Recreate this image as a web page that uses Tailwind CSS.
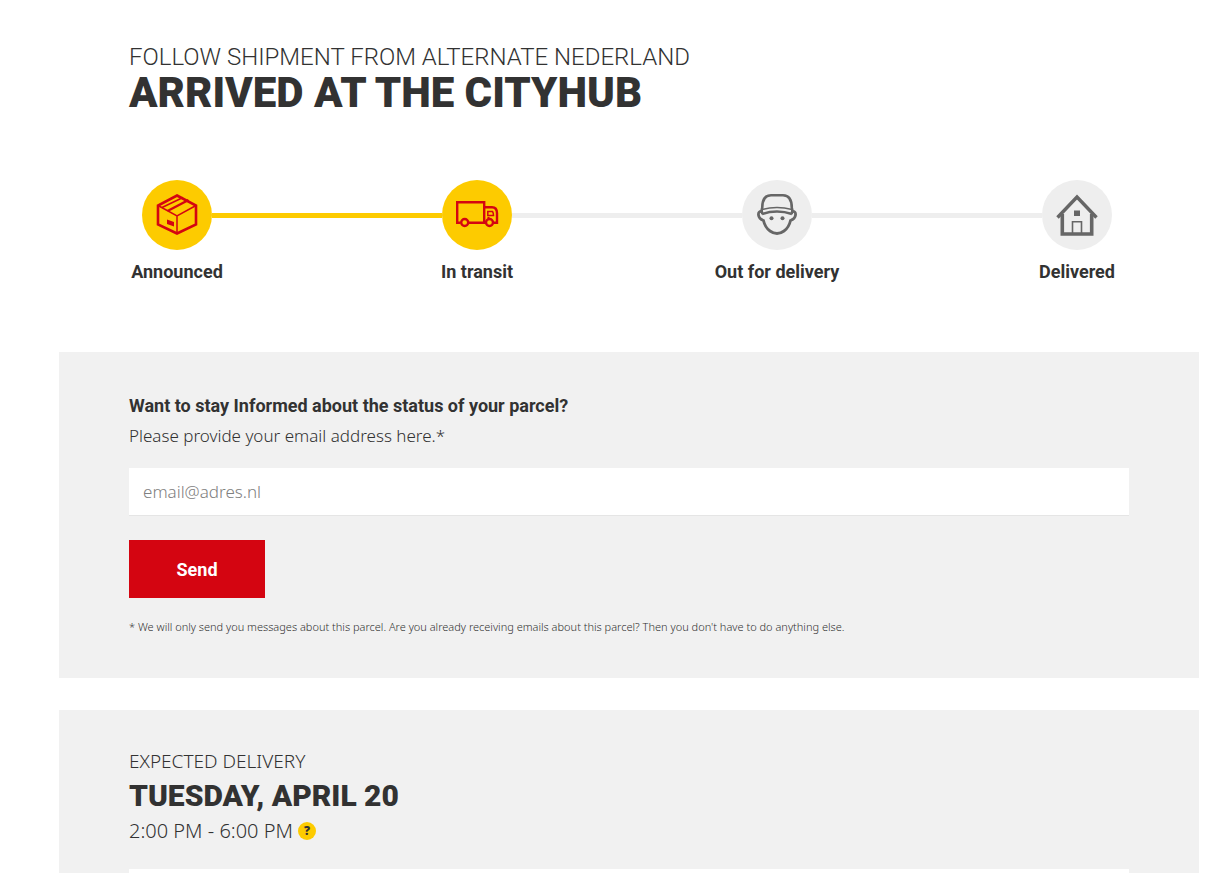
<!DOCTYPE html>
<html lang="en">
  <head>
    <meta charset="UTF-8" />
    <meta name="viewport" content="width=device-width, initial-scale=1.0" />
    <title>Follow shipment</title>
    <script src="https://cdn.jsdelivr.net/npm/@tailwindcss/browser@4"></script>
  </head>
  <body class="bg-white text-[#323232] font-['Noto_Sans',sans-serif]">
    <main class="pt-[41px] pl-[59px] pr-6">
      <!-- Title -->
      <header class="px-[70px]">
        <h1 class="font-['Roboto',sans-serif] uppercase">
          <span class="block text-[24px] leading-8 font-light">Follow shipment from Alternate Nederland</span>
          <span class="block text-[42px] leading-10 font-black">Arrived at the CityHub</span>
        </h1>
      </header>

      <!-- Progress -->
      <ol class="flex items-start mt-[67px] ml-[70px] mr-[74px] text-[18px] leading-6 font-bold font-['Roboto',sans-serif] whitespace-nowrap">
        <li class="flex w-24 flex-col items-center gap-[10px]">
          <span class="flex size-[70px] items-center justify-center rounded-full bg-[#fdcb00]">
            <svg class="size-[70px]" viewBox="0 0 70 70" fill="none" stroke="#d40511" aria-hidden="true">
              <path d="M35 15.500 54 25.500v19L35 53.500 16 44.500v-19z" stroke-width="2.600" />
              <path d="M16 25.500 35 36l19-10.500M35 36v17" stroke-width="1.500" />
              <path d="m25.500 31 21-11" stroke-width="2.400" />
              <path d="m20 27.500 21-10" stroke-width="1.500" />
              <path d="m25 39.500 7 2.500v4.500l-7-2.500z" fill="#d40511" stroke="none" />
            </svg>
          </span>
          <span>Announced</span>
        </li>
        <li class="mt-[33px] -mx-[13px] h-[5px] flex-1 bg-[#fdcb00]" aria-hidden="true"></li>
        <li class="flex w-24 flex-col items-center gap-[10px]">
          <span class="flex size-[70px] items-center justify-center rounded-full bg-[#fdcb00]">
            <svg class="size-[70px]" viewBox="0 0 70 70" fill="none" stroke="#d40511" stroke-width="2.400" aria-hidden="true">
              <path d="M18.500 42.800h-3.300V22.200h27v20.600H27M42.200 27.200H50q5 0 5 6v9.600h-3.300M42.200 42.800h1.500" />
              <circle cx="22.700" cy="42.500" r="3.500" />
              <circle cx="47.500" cy="42.500" r="3.500" />
              <path d="M45.800 31.500h4.700q1 1.500 1 4h-5.700z" stroke-width="1.500" />
              <path d="M45.500 37.500h2" stroke-width="1.200" />
            </svg>
          </span>
          <span>In transit</span>
        </li>
        <li class="mt-[33px] -mx-[13px] h-[5px] flex-1 bg-[#eeeeee]" aria-hidden="true"></li>
        <li class="flex w-24 flex-col items-center gap-[10px]">
          <span class="flex size-[70px] items-center justify-center rounded-full bg-[#eeeeee]">
            <svg class="size-[70px]" viewBox="0 0 70 70" fill="none" stroke="#666" aria-hidden="true">
              <path d="M20.500 34q-1.500-3.500-.3-6Q20.200 15.300 29 15.300h12q8.800 0 8.800 12.700 1.200 2.500-.3 6" stroke-width="2.600" />
              <path d="M20 29.500q15-4 30 0" stroke-width="1.400" />
              <path d="M20 34q15-5 30 0" stroke-width="2.600" />
              <path d="M20 31.500q-4-.5-3.500 3.500t5 5.500q1.500 7 6.500 10.500 7 5 14 0 5-3.500 6.500-10.500 4.500-1.500 5-5.500t-3.500-3.500" stroke-width="2.800" />
              <circle cx="29.500" cy="38.300" r="2" fill="#666" stroke="none" />
              <circle cx="40.500" cy="38.300" r="2" fill="#666" stroke="none" />
            </svg>
          </span>
          <span>Out for delivery</span>
        </li>
        <li class="mt-[33px] -mx-[13px] h-[5px] flex-1 bg-[#eeeeee]" aria-hidden="true"></li>
        <li class="flex w-24 flex-col items-center gap-[10px]">
          <span class="flex size-[70px] items-center justify-center rounded-full bg-[#eeeeee]">
            <svg class="size-[70px]" viewBox="0 0 70 70" fill="none" stroke="#666" aria-hidden="true">
              <path d="M15.500 37.500 35 17l19.500 20.500" stroke-width="3.400" />
              <path d="M20.300 34v20h29.400V34" stroke-width="3.600" />
              <path d="M30.500 53V41.800h9V53" stroke-width="1.600" />
              <path d="M32 30.500h6v5.500h-6z" fill="#666" stroke="none" />
            </svg>
          </span>
          <span>Delivered</span>
        </li>
      </ol>

      <!-- Email updates -->
      <section class="mt-[68px] bg-[#f1f1f1] px-[70px] pt-10 pb-[42px]">
        <form>
          <h2 class="text-[18px] leading-7 font-bold font-['Roboto',sans-serif]">Want to stay Informed about the status of your parcel?</h2>
          <label for="email" class="mt-1 block text-[17px] leading-6 font-light">Please provide your email address here.*</label>
          <input
            type="email"
            id="email"
            name="email"
            placeholder="email@adres.nl"
            class="mt-5 block h-12 w-full border-b border-[#e5e5e5] bg-white px-[14px] text-[17px] font-light placeholder:text-[#808080]"
          />
          <button type="button" class="mt-6 block h-[58px] w-[136px] bg-[#d40511] text-[18px] font-bold text-white font-['Roboto',sans-serif]">Send</button>
          <p class="mt-5 text-[11px] leading-[18px] text-[#323232] font-light">* We will only send you messages about this parcel. Are you already receiving emails about this parcel? Then you don't have to do anything else.</p>
        </form>
      </section>

      <!-- Expected delivery -->
      <section class="mt-8 bg-[#f1f1f1] px-[70px] pt-9 pb-10">
        <h2 class="uppercase">
          <span class="block text-[19px] leading-[30px] font-light">Expected delivery</span>
          <span class="block text-[30px] leading-10 font-black font-['Roboto',sans-serif]">Tuesday, April 20</span>
        </h2>
        <p class="flex items-center gap-[5px] text-[20px] leading-[30px] font-light">
          2:00 PM - 6:00 PM
          <button type="button" aria-label="About the delivery time" class="size-[18px] rounded-full bg-[#fdcb00] text-[12px] leading-[18px] font-black">?</button>
        </p>
        <div class="mt-[23px] h-24 bg-white"></div>
      </section>
    </main>
  </body>
</html>
